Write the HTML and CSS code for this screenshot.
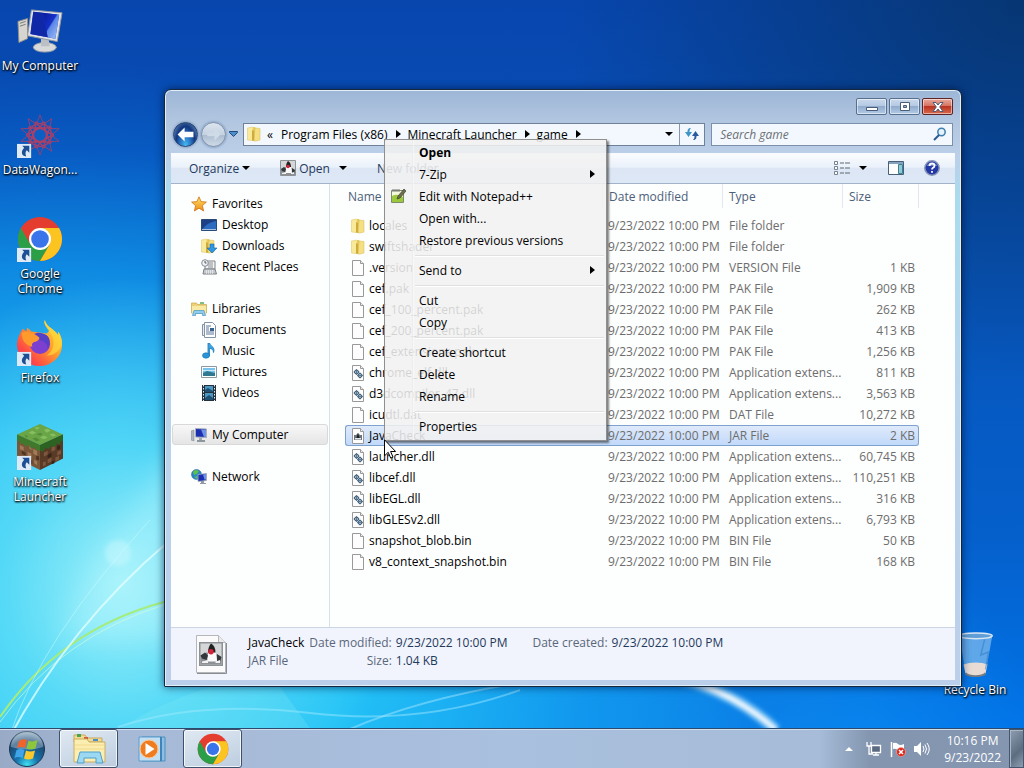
FILE: index.html
```html
<!DOCTYPE html>
<html lang="en">

<head>
  <meta charset="UTF-8"/>
  <meta name="viewport" content="width=device-width, initial-scale=1.0"/>
  <title>game</title>
  <link rel="stylesheet" href="styles.css">
</head>

<body>
<svg class="defs" aria-hidden="true">
  <defs>
    <linearGradient id="gFolder" x1="0" x2="1" y1="0" y2="0">
      <stop offset="0" stop-color="#f9ec9c"/><stop offset=".5" stop-color="#dfc04e"/><stop offset="1" stop-color="#f8e892"/>
    </linearGradient>
    <linearGradient id="gScreen" x1="0" x2="1" y1="0" y2="1">
      <stop offset="0" stop-color="#0b1c9a"/><stop offset=".45" stop-color="#1530c8"/><stop offset=".5" stop-color="#5a86e8"/><stop offset="1" stop-color="#a9c6f6"/>
    </linearGradient>
    <linearGradient id="gFire" x1="1" x2="0" y1="0" y2="1">
      <stop offset="0" stop-color="#fff24a"/><stop offset=".4" stop-color="#ffa22a"/><stop offset=".75" stop-color="#ff4b45"/><stop offset="1" stop-color="#e8227c"/>
    </linearGradient>
    <radialGradient id="gOrb" cx=".5" cy=".95" r=".9">
      <stop offset="0" stop-color="#3fe0f0"/><stop offset=".35" stop-color="#1673ae"/><stop offset=".75" stop-color="#1d4a74"/><stop offset="1" stop-color="#7f9fb8"/>
    </radialGradient>
    <linearGradient id="gStar" x1="0" x2="0" y1="0" y2="1">
      <stop offset="0" stop-color="#ffe36a"/><stop offset="1" stop-color="#f08a14"/>
    </linearGradient>
  </defs>

  <symbol id="folder" viewBox="0 0 16 16">
    <path d="M1.500 2l5-1v13.500l-5-.500z" fill="#f8ea9a" stroke="#dcc25e" stroke-width=".5"/>
    <path d="M6 1h3l1 2v12l-4-1z" fill="url(#gFolder)"/>
    <path d="M9 2l5 .5V14l-4 1H8z" fill="#f4e083" stroke="#d6b850" stroke-width=".5"/>
    <path d="M6 4v10.500l2 .5V5z" fill="#cfab3a"/>
  </symbol>
  <symbol id="page" viewBox="0 0 16 16">
    <path d="M2.500.5h8l3 3v12h-11z" fill="#fdfdfd" stroke="#999"/>
    <path d="M10.500.5v3h3" fill="#eee" stroke="#999"/>
  </symbol>
  <symbol id="dll" viewBox="0 0 16 16">
    <use href="#page"/>
    <circle cx="6.500" cy="7" r="2" fill="#dfe9f3" stroke="#2f526f"/>
    <circle cx="10" cy="10.500" r="2" fill="#dfe9f3" stroke="#2f526f"/>
    <path d="M6.500 4v6M3.500 7h6M10 7.500v6M7 10.500h6" stroke="#2f526f" stroke-width=".6"/>
  </symbol>
  <symbol id="duke" viewBox="0 0 16 16">
    <path d="M.5.5h15v15H.5z" fill="#d4d6d8" stroke="#8e9296"/>
    <path d="M1 9l4-2 6 1 4 2v5H1z" fill="#8d9195"/>
    <path d="M8 2c2 2 4 6 4 11H6c-1-2 0-6 2-11z" fill="#fafafa"/>
    <path d="M8 1c2 1 3 3 3 6L6 7c0-3 1-5 2-6z" fill="#222"/>
    <circle cx="8" cy="6.500" r="1.800" fill="#d3243c"/>
    <path d="M1 9l3-2 2 2-1 3-3-1zM12 8l3 2-1 3h-2z" fill="#33383c"/>
    <path d="M2 13l4-1v2H2zM11 13l3-1v2h-3z" fill="#f2f2f2"/>
  </symbol>
  <symbol id="jar" viewBox="0 0 16 16">
    <use href="#page"/>
    <path d="M4 7h2l2-2 2 2h2v5H4z" fill="#6c757f"/>
    <path d="M8 5l2 6H6z" fill="#1e2328"/><path d="M5 10h6v1.500H5z" fill="#e4e6e8"/>
  </symbol>
  <symbol id="star" viewBox="0 0 16 16">
    <path d="M8 .8l2.100 4.800 5.300.5-4 3.500 1.200 5.400L8 12.200 3.400 15l1.200-5.400-4-3.500 5.300-.5z" fill="url(#gStar)" stroke="#c87618" stroke-width=".8"/>
  </symbol>
  <symbol id="desk" viewBox="0 0 16 16">
    <path d="M.5 2.500h15v11H.5z" fill="#2b6bc0" stroke="#2a4a78"/>
    <path d="M1 13C4 8 9 5 15 4V3H1z" fill="#1c3f86"/>
    <path d="M1 12h14v1H1z" fill="#a8c4e2"/>
  </symbol>
  <symbol id="down" viewBox="0 0 16 16">
    <use href="#folder" x="-1"/>
    <path d="M9 6h4v4h3l-5 5-5-5h3z" fill="#2f97e2" stroke="#1666aa" stroke-width=".6"/>
  </symbol>
  <symbol id="recent" viewBox="0 0 16 16">
    <path d="M4 2h10v8H4z" fill="#f4f4f4" stroke="#7c8288"/>
    <path d="M7 4h5M7 6h5M7 8h5" stroke="#868c94"/>
    <path d="M3 10h11l1.500 5H2z" fill="#c4c8cc" stroke="#7c8288"/>
    <path d="M5 12h7M5 14h8" stroke="#fff" stroke-dasharray="1 1"/>
    <circle cx="4" cy="4" r="3.300" fill="#eef2f6" stroke="#858c94"/>
    <path d="M4 2v2h1.500" fill="none" stroke="#555"/>
  </symbol>
  <symbol id="lib" viewBox="0 0 16 16">
    <path d="M.5 2h5l1 1.500h9V12H.5z" fill="#ecd078" stroke="#c8a848" stroke-width=".7"/>
    <path d="M1 5h14v7H1z" fill="#f8eaa4"/>
    <path d="M9 2h4" stroke="#58a85a" stroke-width="1.500"/>
    <path d="M3 9.500h10l1.500 5h-3v-2h-7v2h-3z" fill="#8fcdf0" stroke="#4a93c0" stroke-width=".7"/>
  </symbol>
  <symbol id="doc" viewBox="0 0 16 16">
    <path d="M3.500.5h8l3 3v12h-11z" fill="#fff" stroke="#8492a4"/>
    <path d="M1.500 2.500h2v11h-2z" fill="#e6ecf4" stroke="#8492a4"/>
    <path d="M5 4h5M5 6h3M5 8h3M5 10h8M5 12h8" stroke="#5c7698"/>
    <path d="M9 6h4v3H9z" fill="#35618e"/>
  </symbol>
  <symbol id="music" viewBox="0 0 16 16">
    <path d="M7 13V0h1.500c1 3.500 6 4 4 9.500 0-3-2-4-4-4.300V13z" fill="#3da6e2" stroke="#1a78b8" stroke-width=".8"/>
    <ellipse cx="5" cy="12.500" rx="3.500" ry="2.700" fill="#2a96da" stroke="#1a70ac" stroke-width=".6"/>
  </symbol>
  <symbol id="pic" viewBox="0 0 16 16">
    <path d="M.5 2.500h15v11H.5z" fill="#fff" stroke="#8b97a3"/>
    <path d="M2 4h12v8H2z" fill="#79c2ec"/><path d="M2 9l4-2 8 2v3H2z" fill="#2f7890"/><path d="M2 6h12v1H2z" fill="#c7e9f8"/>
  </symbol>
  <symbol id="video" viewBox="0 0 16 16">
    <path d="M1 0h14v16H1z" fill="#24303a"/><path d="M4 1h8v6H4zM4 8h8v7H4z" fill="#4a97c4"/>
    <path d="M2.500 0v16M13.500 0v16" stroke="#e4eaf0" stroke-dasharray="1.500 1.500"/>
    <path d="M4 5l3-2 5 3v1H4zM4 13l4-3 4 3v2H4z" fill="#1d5072"/>
  </symbol>
  <symbol id="pc" viewBox="0 0 16 16">
    <path d="M0 4l3-1v11l-3-1z" fill="#aeb6c0" stroke="#7b848e" stroke-width=".5"/>
    <path d="M4.500 1.500l11 .5v8.500l-11-.5z" fill="#1c2fae" stroke="#a9b1bd"/>
    <path d="M10 2.500l5 .2V10l-2-.1z" fill="#6f92e4"/>
    <path d="M8 11h3v2H8z" fill="#a4a9af"/><path d="M6 13h8v2H6z" fill="#8d959e"/>
  </symbol>
  <symbol id="net" viewBox="0 0 16 16">
    <circle cx="5.500" cy="5.500" r="5" fill="#2a85c8" stroke="#1d5e92" stroke-width=".5"/>
    <path d="M2 3c2-3 4-2 6-1L6 5 3 6zM3 8l3-1v3z" fill="#5cc04f"/>
    <path d="M7 5.500l8.500-1v7l-8.500 1z" fill="#1c2fae" stroke="#a9b1bd" stroke-width=".8"/>
    <path d="M12 5.500l3-.4v5.500l-1.500.2z" fill="#6f92e4"/>
    <path d="M10 12h3v2h2v1H9v-1h1z" fill="#9199a2"/>
  </symbol>
  <symbol id="chrome" viewBox="0 0 48 48">
    <circle cx="24" cy="24" r="23" fill="#e53c30"/>
    <path d="M4.100 12.500A23 23 0 0 0 24 47l10-17.200-10 5.700-10-5.700z" fill="#2a9f47"/>
    <path d="M24 12.500h19.900A23 23 0 0 1 24 47l10-17.300z" fill="#fcc420"/>
    <circle cx="24" cy="24" r="11.500" fill="#fff"/><circle cx="24" cy="24" r="9.200" fill="#3a74ea"/>
  </symbol>
  <symbol id="arrow" viewBox="0 0 14 14">
    <path d="M0 0h14v14H0z" fill="#dfeaf6"/>
    <path d="M5 2h7v7l-2.500-2.500C8 8 8 10 9 12.500 4 12 3.500 7.500 7 4z" fill="#1d4f94"/>
  </symbol>
  <symbol id="petal" viewBox="0 0 44 44">
    <path d="M22 1l8 21-8 10-8-10zM22 10l12 4-12 16-12-16z" fill="none" stroke="#a8406a" stroke-width=".8"/>
  </symbol>
</svg>

<main class="desktop">
  <svg class="wallpaper" viewBox="0 0 1024 768" preserveAspectRatio="none" aria-hidden="true">
    <defs>
      <filter id="soft"><feGaussianBlur stdDeviation="2"/></filter>
      <filter id="wide"><feGaussianBlur stdDeviation="14"/></filter>
    </defs>
    <path d="M60 640Q90 560 190 430V640z" fill="#c4fbff" opacity=".35" filter="url(#wide)"/>
    <circle cx="118" cy="553" r="13" fill="#d8fbff" opacity=".4" filter="url(#soft)"/>
    <path d="M0 717Q60 630 164 602" fill="none" stroke="#a4ec7c" stroke-width="2"/>
    <path d="M0 722Q62 636 164 605" fill="none" stroke="#d8ffd0" opacity=".6"/>
    <path d="M8 740Q70 625 168 542" fill="none" stroke="#e6ffff" stroke-width="2" opacity=".75"/>
    <path d="M10 735Q40 640 150 520" fill="none" stroke="#d0fbff" opacity=".5"/>
    <path d="M118 727Q200 700 310 713T520 690" fill="none" stroke="#a8ecff" stroke-width="2" opacity=".45"/>
    <path d="M350 729Q430 695 540 680" fill="none" stroke="#a4e6ff" stroke-width="2" opacity=".5"/>
    <path d="M280 687l30 41H120q40-25 90-41z" fill="#8ff0f4" opacity=".2"/>
    <path d="M640 670Q725 682 776 730" fill="none" stroke="#aee6ff" stroke-width="12" opacity=".5" filter="url(#soft)"/>
    <path d="M650 670Q728 686 776 730" fill="none" stroke="#fff" stroke-width="5" filter="url(#soft)"/>
  </svg>

  <nav class="shortcuts" aria-label="Desktop">
    <a class="shortcut" href="#computer">
      <svg viewBox="0 0 48 48">
        <path d="M1 14l10-3v21L2 36z" fill="#d6d5cf" stroke="#8f8f8b"/><path d="M3 16l6-2M3 19l6-2" stroke="#777"/>
        <ellipse cx="29" cy="41" rx="12" ry="5" fill="#d8d9da" stroke="#969da5"/>
        <path d="M25 32h8l1 8h-9z" fill="#bcc0c4"/>
        <path d="M15 2l32 3-5 30-31-6z" fill="#e0e2e5" stroke="#9299a2"/>
        <path d="M17 4l27 3-4 25-26-5z" fill="#1c36c4"/>
        <path d="M27 5l17 2-4 25-8-1.500z" fill="url(#gScreen)"/>
        <path d="M17 4l10 1 5 25.500L14 27z" fill="#1028a8"/>
      </svg>
      <span>My Computer</span>
    </a>
    <a class="shortcut" href="#datawagon">
      <svg viewBox="0 0 48 48">
        <g transform="translate(2 2)">
          <use href="#petal" width="44" height="44"/>
          <use href="#petal" width="44" height="44" transform="rotate(36 22 22)"/>
          <use href="#petal" width="44" height="44" transform="rotate(72 22 22)"/>
          <use href="#petal" width="44" height="44" transform="rotate(108 22 22)"/>
          <use href="#petal" width="44" height="44" transform="rotate(144 22 22)"/>
          <use href="#petal" width="44" height="44" transform="rotate(180 22 22)"/>
          <use href="#petal" width="44" height="44" transform="rotate(216 22 22)"/>
          <use href="#petal" width="44" height="44" transform="rotate(252 22 22)"/>
          <use href="#petal" width="44" height="44" transform="rotate(288 22 22)"/>
          <use href="#petal" width="44" height="44" transform="rotate(324 22 22)"/>
          <circle cx="22" cy="22" r="6" fill="#0b5fc4"/>
        </g>
        <use href="#arrow" y="33" width="15" height="15"/>
      </svg>
      <span>DataWagon...</span>
    </a>
    <a class="shortcut" href="#chrome-app">
      <svg viewBox="0 0 48 48"><use href="#chrome" width="48" height="48"/><use href="#arrow" y="33" width="15" height="15"/></svg>
      <span>Google Chrome</span>
    </a>
    <a class="shortcut" href="#firefox">
      <svg viewBox="0 0 48 48">
        <path d="M29 0c-2 4 2 7 5 11l-3 3-16-2-4-4c-1 1-1 3-1 4L6 9C2 15 0 20 0 26a23.500 22 0 0 0 47 0c0-6-2-11-4-14v4C39 9 31 8 29 0z" fill="url(#gFire)"/>
        <path d="M29 0c-2 8 8 12 9 21 1 8-3 14-8 16 8 1 17-6 17-14 0-4-2-8-4-11v4C39 9 31 8 29 0z" fill="#ffd93a" opacity=".7"/>
        <circle cx="24" cy="25" r="10.500" fill="#7c3fd0"/>
        <path d="M17 15c4-3 10-2 14 1 4 3 4 10 1 14 0-5-3-8-8-9z" fill="#5740c8"/>
        <path d="M5 13l5-1c4 2 7 1 13 6 1 2-1 4-5 5-2 1-3 2-2 5-6-1-12-7-11-15z" fill="#ff9a2c"/>
        <use href="#arrow" y="33" width="15" height="15"/>
      </svg>
      <span>Firefox</span>
    </a>
    <a class="shortcut" href="#minecraft">
      <svg viewBox="0 0 48 48">
        <path d="M0 11v25l24 12V22z" fill="#7a5539"/><path d="M48 11v25L24 48V22z" fill="#593a26"/>
        <path d="M3 22l4 2v4l-4-2zM11 29l4 2v4l-4-2zM17 26l4 2v5l-4-2zM7 33l3 2v4l-3-2zM18 37l3 2v4l-3-2zM13 22l3 2v3l-3-1z" fill="#a17a58"/>
        <path d="M5 28l4 2v3l-4-2zM12 36l4 2v4l-4-2zM20 33l3 1v4l-3-1z" fill="#4d3321"/>
        <path d="M28 30l4-2v4l-4 2zM36 24l4-2v5l-4 2zM42 29l4-2v4l-4 2zM32 37l4-2v4l-4 2zM40 35l4-2v4l-4 2zM27 40l3-1v4l-3 1z" fill="#7d583c"/>
        <path d="M32 32l4-2v4l-4 2zM42 23l3-1v4l-3 1zM36 39l3-1v3l-3 1z" fill="#38251a"/>
        <path d="M0 11L24 0l24 11-24 11z" fill="#6aa548"/>
        <path d="M0 11v6l3 1v3l3-1 3 4 3-3 3 5 3-2 3 4 3-1v-5z" fill="#3f7a2c"/>
        <path d="M48 11v6l-3 2v3l-3-2-3 4-3-1-3 3-3-1-3 4-3-1v-6z" fill="#2d6322"/>
        <path d="M12 9l4-2 4 2-4 2zM24 14l4-2 4 2-4 2zM28 6l4-1 3 2-4 2zM18 4l3-1 3 1-3 2zM34 11l4-1 3 2-4 1z" fill="#86bf62"/>
        <path d="M8 11l4 2-3 1zM20 11l4-2 3 2-3 1zM16 15l4-1 4 3-4 1z" fill="#528d38"/>
        <use href="#arrow" y="33" width="15" height="15"/>
      </svg>
      <span>Minecraft Launcher</span>
    </a>
  </nav>

  <a class="shortcut recycle" href="#recycle">
    <svg viewBox="0 0 48 48">
      <path d="M8 4l6 39c4 4 17 4 21 0l7-39z" fill="#8fc4ee" opacity=".65"/>
      <path d="M12 34l2 9c4 4 17 4 21 0l2-9c-6-3-18-3-25 0z" fill="#e9dcd4"/>
      <path d="M34 8l-4 16 8-3-3 18" fill="none" stroke="#2f78bd" stroke-width="1.500" opacity=".5"/>
      <ellipse cx="25" cy="4" rx="17" ry="3" fill="#5f9ed6" stroke="#d9e7f2" stroke-width="1.500"/>
      <path d="M14 43c4 4 17 4 21 0" fill="none" stroke="#757b84" stroke-width="2"/>
    </svg>
    <span>Recycle Bin</span>
  </a>

  <section class="window" aria-label="game">
    <header class="titlebar">
      <button class="caption" aria-label="Minimize"><svg viewBox="0 0 12 12"><path d="M.5 6.500h11v3H.5z"/></svg></button>
      <button class="caption" aria-label="Maximize"><svg viewBox="0 0 12 12"><path d="M1.500 1.500h9v8h-9zM4.500 4.500h3v2h-3z" fill-rule="evenodd"/></svg></button>
      <button class="caption caption--close" aria-label="Close"><svg viewBox="0 0 12 12"><path d="M1 1.500h3l2 2.500 2-2.500h3L7.700 6l3.300 4.500H8L6 8l-2 2.500H1L4.300 6z"/></svg></button>
    </header>

    <div class="navbar">
      <div class="travel">
        <button class="travel-btn" aria-label="Back"><svg viewBox="0 0 26 26"><path d="M12 5l-8 8 8 8v-5h10v-6H12z" fill="#fff"/></svg></button>
        <button class="travel-btn travel-btn--off" aria-label="Forward"><svg viewBox="0 0 26 26"><path d="M14 6l7 7-7 7v-5H6v-4h8z" fill="#d0dbe8"/></svg></button>
        <button class="plain" aria-label="Recent pages"><svg class="caret" viewBox="0 0 9 6"><path d="M.5.500h8v1L4.500 5.500l-4-4z" fill="#4d8fcc" stroke="#1e4a7c"/></svg></button>
      </div>
      <div class="address">
        <svg class="icon"><use href="#folder"/></svg>
        <button class="plain chev">«</button>
        <a class="crumb" href="#programs">Program Files (x86)</a>
        <svg class="tri" viewBox="0 0 5 8"><path d="M0 0l5 4-5 4z"/></svg>
        <a class="crumb" href="#launcher">Minecraft Launcher</a>
        <svg class="tri" viewBox="0 0 5 8"><path d="M0 0l5 4-5 4z"/></svg>
        <a class="crumb" href="#game">game</a>
        <svg class="tri" viewBox="0 0 5 8"><path d="M0 0l5 4-5 4z"/></svg>
        <button class="plain address-drop" aria-label="Previous locations"><svg class="drop" viewBox="0 0 8 4"><path d="M0 0h8L4 4z"/></svg></button>
        <button class="plain refresh" aria-label="Refresh"><svg viewBox="0 0 16 16"><path d="M7 2C4 2 3.500 4 3.500 6H1l3.500 5L8 6H5.500c0-2 .5-3 1.500-4z" fill="#3c96c8"/><path d="M9 14c3 0 3.500-2 3.500-4H15l-3.500-5L8 10h2.500c0 2-.5 3-1.500 4z" fill="#2d5a9c"/></svg></button>
      </div>
      <label class="search">
        <input type="text" placeholder="Search game" aria-label="Search game"/>
        <svg viewBox="0 0 14 14"><circle cx="8.500" cy="5" r="3.700" fill="#e4f2fc" stroke="#3f7fae" stroke-width="1.500"/><path d="M6 8l-5 5" stroke="#2d5b8e" stroke-width="2"/></svg>
      </label>
    </div>

    <div class="content">
      <div class="toolbar">
        <button class="tool">Organize <svg class="drop" viewBox="0 0 8 4"><path d="M0 0h8L4 4z"/></svg></button>
        <button class="tool tool--open"><svg class="icon"><use href="#duke"/></svg><span>Open</span><svg class="drop" viewBox="0 0 8 4"><path d="M0 0h8L4 4z"/></svg></button>
        <button class="tool">New folder</button>
        <div class="tool-right">
          <button class="tool" aria-label="Change view"><svg class="icon" viewBox="0 0 16 16"><path d="M.500 1.500h3v3h-3zM.500 6.500h3v3h-3zM.500 11.500h3v3h-3z" fill="#fff" stroke="#76838f"/><path d="M6 3h4M11 3h5M6 8h4M11 8h5M6 13h4M11 13h5" stroke="#5c6874"/></svg></button>
          <button class="tool" aria-label="More view options"><svg class="drop" viewBox="0 0 8 4"><path d="M0 0h8L4 4z"/></svg></button>
          <button class="tool tool--pane" aria-label="Preview pane"><svg class="icon" viewBox="0 0 16 16"><path d="M.5 1.500h15v13H.5z" fill="#fff" stroke="#45607c"/><path d="M1 2h14v2H1z" fill="#86a2bd"/><path d="M10.500 4.500h4v9h-4z" fill="#8fcad6" stroke="#3c7f90"/></svg></button>
          <button class="tool" aria-label="Help"><svg class="icon" viewBox="0 0 16 16"><circle cx="8" cy="8" r="7.200" fill="#2338a4" stroke="#8793b8" stroke-width="1.500"/><path d="M2.500 6a6 5 0 0 1 11 0z" fill="#7d97e2" opacity=".7"/><path d="M5.500 6q0-2.500 2.500-2.500t2.500 2.200Q10.500 7 9 7.800q-1 .6-1 1.700M8 11v1.800" fill="none" stroke="#fff" stroke-width="1.800"/></svg></button>
        </div>
      </div>

      <div class="panes">
        <nav class="sidebar" aria-label="Folders">
          <ul>
            <li><a class="node" href="#favorites"><svg class="icon"><use href="#star"/></svg>Favorites</a></li>
            <li><a class="node node--sub" href="#desktop"><svg class="icon"><use href="#desk"/></svg>Desktop</a></li>
            <li><a class="node node--sub" href="#downloads"><svg class="icon"><use href="#down"/></svg>Downloads</a></li>
            <li><a class="node node--sub" href="#recents"><svg class="icon"><use href="#recent"/></svg>Recent Places</a></li>
          </ul>
          <ul>
            <li><a class="node" href="#libraries"><svg class="icon"><use href="#lib"/></svg>Libraries</a></li>
            <li><a class="node node--sub" href="#documents"><svg class="icon"><use href="#doc"/></svg>Documents</a></li>
            <li><a class="node node--sub" href="#musics"><svg class="icon"><use href="#music"/></svg>Music</a></li>
            <li><a class="node node--sub" href="#pictures"><svg class="icon"><use href="#pic"/></svg>Pictures</a></li>
            <li><a class="node node--sub" href="#videos"><svg class="icon"><use href="#video"/></svg>Videos</a></li>
          </ul>
          <ul>
            <li><a class="node node--active" href="#computer"><svg class="icon"><use href="#pc"/></svg>My Computer</a></li>
          </ul>
          <ul>
            <li><a class="node" href="#network"><svg class="icon"><use href="#net"/></svg>Network</a></li>
          </ul>
        </nav>

        <div class="list">
          <table>
            <colgroup><col class="col-name"><col class="col-mid"><col class="col-mid"><col class="col-size"></colgroup>
            <thead>
              <tr><th>Name</th><th>Date modified</th><th>Type</th><th>Size</th></tr>
            </thead>
            <tbody>
              <tr><td><svg class="icon"><use href="#folder"/></svg>locales</td><td>9/23/2022 10:00 PM</td><td>File folder</td><td></td></tr>
              <tr><td><svg class="icon"><use href="#folder"/></svg>swiftshader</td><td>9/23/2022 10:00 PM</td><td>File folder</td><td></td></tr>
              <tr><td><svg class="icon"><use href="#page"/></svg>.version</td><td>9/23/2022 10:00 PM</td><td>VERSION File</td><td>1 KB</td></tr>
              <tr><td><svg class="icon"><use href="#page"/></svg>cef.pak</td><td>9/23/2022 10:00 PM</td><td>PAK File</td><td>1,909 KB</td></tr>
              <tr><td><svg class="icon"><use href="#page"/></svg>cef_100_percent.pak</td><td>9/23/2022 10:00 PM</td><td>PAK File</td><td>262 KB</td></tr>
              <tr><td><svg class="icon"><use href="#page"/></svg>cef_200_percent.pak</td><td>9/23/2022 10:00 PM</td><td>PAK File</td><td>413 KB</td></tr>
              <tr><td><svg class="icon"><use href="#page"/></svg>cef_extensions.pak</td><td>9/23/2022 10:00 PM</td><td>PAK File</td><td>1,256 KB</td></tr>
              <tr><td><svg class="icon"><use href="#dll"/></svg>chrome_elf.dll</td><td>9/23/2022 10:00 PM</td><td>Application extens...</td><td>811 KB</td></tr>
              <tr><td><svg class="icon"><use href="#dll"/></svg>d3dcompiler_47.dll</td><td>9/23/2022 10:00 PM</td><td>Application extens...</td><td>3,563 KB</td></tr>
              <tr><td><svg class="icon"><use href="#page"/></svg>icudtl.dat</td><td>9/23/2022 10:00 PM</td><td>DAT File</td><td>10,272 KB</td></tr>
              <tr class="selected"><td><svg class="icon"><use href="#jar"/></svg>JavaCheck</td><td>9/23/2022 10:00 PM</td><td>JAR File</td><td>2 KB</td></tr>
              <tr><td><svg class="icon"><use href="#dll"/></svg>launcher.dll</td><td>9/23/2022 10:00 PM</td><td>Application extens...</td><td>60,745 KB</td></tr>
              <tr><td><svg class="icon"><use href="#dll"/></svg>libcef.dll</td><td>9/23/2022 10:00 PM</td><td>Application extens...</td><td>110,251 KB</td></tr>
              <tr><td><svg class="icon"><use href="#dll"/></svg>libEGL.dll</td><td>9/23/2022 10:00 PM</td><td>Application extens...</td><td>316 KB</td></tr>
              <tr><td><svg class="icon"><use href="#dll"/></svg>libGLESv2.dll</td><td>9/23/2022 10:00 PM</td><td>Application extens...</td><td>6,793 KB</td></tr>
              <tr><td><svg class="icon"><use href="#page"/></svg>snapshot_blob.bin</td><td>9/23/2022 10:00 PM</td><td>BIN File</td><td>50 KB</td></tr>
              <tr><td><svg class="icon"><use href="#page"/></svg>v8_context_snapshot.bin</td><td>9/23/2022 10:00 PM</td><td>BIN File</td><td>168 KB</td></tr>
            </tbody>
          </table>
        </div>
      </div>

      <footer class="details">
        <svg class="details-icon" viewBox="0 0 32 40">
          <path d="M1.500 1.500h22l7 7v30h-29z" fill="#fbfbfb" stroke="#b4b6ba"/><path d="M23.500 1.500v7h7" fill="#eaeaea" stroke="#b4b6ba"/>
          <path d="M2 39.500h29.500V9" fill="none" stroke="#8a8d92"/>
          <use href="#duke" x="4" y="8" width="24" height="24"/>
        </svg>
        <div class="details-name"><strong>JavaCheck</strong><span>JAR File</span></div>
        <dl>
          <dt>Date modified:</dt><dd>9/23/2022 10:00 PM</dd>
          <dt>Size:</dt><dd>1.04 KB</dd>
        </dl>
        <dl class="details-created">
          <dt>Date created:</dt><dd>9/23/2022 10:00 PM</dd>
        </dl>
      </footer>
    </div>
  </section>

  <ul class="menu" role="menu">
    <li role="none"><button role="menuitem" class="menu-default">Open</button></li>
    <li role="none"><button role="menuitem">7-Zip<svg class="tri" viewBox="0 0 5 8"><path d="M0 0l5 4-5 4z"/></svg></button></li>
    <li role="none"><button role="menuitem"><svg class="menu-icon" viewBox="0 0 16 16"><path d="M1.500 2.500h12v12h-12z" fill="#f4f8dc" stroke="#7d8a6c"/><path d="M2 8q5-3 11 1v5H2z" fill="#9cc83c"/><path d="M3 1v3M5 1v3M7 1v3M9 1v3" stroke="#777"/><path d="M14 1l2 2-6 7-3 1 1-3z" fill="#6d6f48" stroke="#333" stroke-width=".6"/></svg>Edit with Notepad++</button></li>
    <li role="none"><button role="menuitem">Open with...</button></li>
    <li role="none"><button role="menuitem">Restore previous versions</button></li>
    <li role="separator"></li>
    <li role="none"><button role="menuitem">Send to<svg class="tri" viewBox="0 0 5 8"><path d="M0 0l5 4-5 4z"/></svg></button></li>
    <li role="separator"></li>
    <li role="none"><button role="menuitem">Cut</button></li>
    <li role="none"><button role="menuitem">Copy</button></li>
    <li role="separator"></li>
    <li role="none"><button role="menuitem">Create shortcut</button></li>
    <li role="none"><button role="menuitem">Delete</button></li>
    <li role="none"><button role="menuitem">Rename</button></li>
    <li role="separator"></li>
    <li role="none"><button role="menuitem">Properties</button></li>
  </ul>

  <svg class="cursor" viewBox="0 0 12 20" aria-hidden="true"><path d="M.500.800v16l3.700-3.500 2.500 5.800 2.300-1L6.600 12.500h5z" fill="#fff" stroke="#000"/></svg>
</main>

<footer class="taskbar">
  <button class="start" aria-label="Start">
    <svg viewBox="0 0 38 38">
      <circle cx="19" cy="19" r="17.500" fill="url(#gOrb)" stroke="#1b3852"/>
      <path d="M3 17a16 16 0 0 1 32 0q-16 5-32 0z" fill="#fff" opacity=".3"/>
      <path d="M11 11q4-3 8-1l-2 8q-4-2-8 0z" fill="#f0642c"/>
      <path d="M20.500 10.500q4 2 9-.5l-2 8.500q-5 2-9 0z" fill="#8cc63c"/>
      <path d="M8.500 20q4-2 8 0l-2 8q-4-2-8 0z" fill="#3fa4e8"/>
      <path d="M18 20.500q4 2 9 0l-2 8q-5 2-9 0z" fill="#fcc92c"/>
    </svg>
  </button>
  <div class="tasks">
    <button class="task task--on" aria-label="File Explorer">
      <svg viewBox="0 0 36 32">
        <path d="M3 2h11l2 3h15v4H3z" fill="#f2dc92" stroke="#c9a858"/><path d="M6 1h4v3H6z" fill="#4aa34e"/><path d="M13 4h4v2h-4z" fill="#cc5a3c"/><path d="M22 6h5v2h-5z" fill="#4d8fca"/>
        <path d="M3 6h13l2 3h16v20H3z" fill="#fbeeb0" stroke="#cbae62"/><path d="M4 12h29M4 16h29" stroke="#f1d98a"/>
        <path d="M9 19h20l3 11h-7v-5H13v5H6z" fill="#9cd8f2" stroke="#4da0cc"/>
      </svg>
    </button>
    <button class="task" aria-label="Media Player">
      <svg viewBox="0 0 36 32">
        <path d="M9 4h23v24H9z" fill="#8dbfe2" stroke="#4f8fc0"/><path d="M6 4h22v24H6z" fill="#c3dff2" stroke="#5d9ccb"/><path d="M28 4v24" stroke="#3f84ba" stroke-width="2"/>
        <circle cx="16" cy="16" r="9" fill="#f07c20" stroke="#f9c89a"/><path d="M12.500 10l9 6-9 6z" fill="#fff"/>
      </svg>
    </button>
    <button class="task task--on" aria-label="Google Chrome"><svg viewBox="0 0 32 32"><use href="#chrome" width="32" height="32"/></svg></button>
  </div>
  <div class="tray">
    <button class="plain" aria-label="Show hidden icons"><svg class="drop" viewBox="0 0 8 4"><path d="M0 4h8L4 0z" fill="#fff"/></svg></button>
    <svg class="icon" viewBox="0 0 16 16"><path d="M5.500 4.500h9v7h-9zM7 14h6M10 12v2" fill="#5a6a80" stroke="#fff" stroke-width="1.300"/><path d="M1 1v4h4V1M3 5v8h4" fill="none" stroke="#fff" stroke-width="1.300"/></svg>
    <svg class="icon" viewBox="0 0 16 16"><path d="M1.500 1v15" stroke="#fff" stroke-width="1.500"/><path d="M3 2q3-1 5 1t6 0v6q-3 2-6 0T3 8z" fill="#fff"/><circle cx="11" cy="11" r="4.500" fill="#d8281c" stroke="#f6b0a8" stroke-width=".6"/><path d="M9 9l4 4M13 9l-4 4" stroke="#fff" stroke-width="1.500"/></svg>
    <svg class="icon" viewBox="0 0 16 16"><path d="M0 5h3l4-4v14l-4-4H0z" fill="#fff"/><path d="M9 5q2 3 0 6M11 3.500q3 4.500 0 9M13 2q4.500 6 0 12" fill="none" stroke="#fff"/></svg>
    <time datetime="2022-09-23T22:16">10:16 PM<br>9/23/2022</time>
  </div>
  <button class="peek" aria-label="Show desktop"></button>
</footer>
</body>

</html>
```
FILE: styles.css
```css
* {
  box-sizing: border-box;
}

body {
  margin: 0;
  height: 100vh;
  display: flex;
  flex-direction: column;
  overflow: hidden;
  font-family: "Open Sans", "Noto Sans", sans-serif;
  font-size: 12px;
  line-height: 15px;
  color: #000;
  background:
    radial-gradient(ellipse 26% 40% at 12% 76%, rgba(176, 246, 250, 0.85), rgba(110, 228, 248, 0.6) 45%, rgba(60, 210, 248, 0) 100%),
    radial-gradient(ellipse 80% 76% at 6% 84%, #35cdf5 0%, rgba(36, 196, 246, 0.95) 35%, rgba(16, 150, 236, 0.8) 65%, rgba(8, 110, 215, 0.4) 85%, rgba(8, 100, 205, 0) 100%),
    radial-gradient(ellipse 60% 50% at 42% 100%, rgba(28, 176, 255, 0.9), rgba(10, 130, 240, 0) 100%),
    radial-gradient(ellipse 45% 50% at 100% 0%, rgba(6, 50, 100, 0.8), rgba(6, 60, 130, 0) 100%),
    linear-gradient(180deg, #0846ae 0%, #0753b8 35%, #0560cc 70%, #0078ee 100%);
}

button,
input {
  font: inherit;
  color: inherit;
}

button {
  display: flex;
  align-items: center;
  margin: 0;
  padding: 0;
  border: 0;
  background: none;
}

a {
  color: inherit;
  text-decoration: none;
}

ul,
dl,
dd {
  margin: 0;
  padding: 0;
  list-style: none;
}

.defs {
  position: absolute;
  width: 0;
  height: 0;
}

.icon {
  flex: none;
  width: 16px;
  height: 16px;
}

.drop {
  width: 8px;
  height: 4px;
}

.tri {
  width: 5px;
  height: 8px;
}

/* desktop */
.desktop {
  position: relative;
  flex: 1;
  min-height: 0;
}

.wallpaper {
  position: absolute;
  top: 0;
  left: 0;
  width: 100%;
  height: 100vh;
}

.shortcuts {
  position: absolute;
  top: 8px;
  left: 0;
  display: grid;
  grid-auto-rows: 104px;
}

.shortcut {
  display: flex;
  flex-direction: column;
  align-items: center;
  gap: 4px;
  width: 80px;
  color: #fff;
  text-align: center;
  text-shadow: 1px 1px 2px #000, 0 1px 2px #000;
}

.shortcut svg {
  width: 46px;
  height: 46px;
}

.recycle {
  position: absolute;
  right: 9px;
  bottom: 31px;
}

/* explorer window */
.window {
  position: absolute;
  top: 89px;
  right: 62px;
  bottom: 41px;
  left: 164px;
  display: flex;
  flex-direction: column;
  padding: 0 6px 6px;
  border: 1px solid #16263c;
  border-radius: 7px 7px 1px 1px;
  background: linear-gradient(180deg, #9db6d6 0, #b3c7e1 34px, #bccfe9 64px, #a9dcee 110px, #bad5ec 300px, #bccfea 100%);
  box-shadow: inset 0 0 0 1px #e0f0fb, 0 0 8px rgba(0, 20, 60, 0.7);
}

.titlebar {
  display: flex;
  justify-content: flex-end;
  gap: 2px;
  height: 33px;
  padding: 8px 2px 0;
}

.caption {
  justify-content: center;
  width: 31px;
  height: 17px;
  border: 1px solid #58708e;
  border-radius: 2px;
  background: linear-gradient(180deg, #c9d9ec 0, #b4c9e2 48%, #92acce 50%, #b2cae4 100%);
  box-shadow: inset 0 0 0 1px rgba(255, 255, 255, 0.5);
}

.caption svg {
  width: 12px;
  height: 12px;
  fill: #fff;
  stroke: #4a5c76;
}

.caption--close {
  border-color: #5c2426;
  background: linear-gradient(180deg, #e8a99c 0, #d5715f 48%, #bb3421 50%, #d8684c 100%);
}

.navbar {
  display: flex;
  align-items: center;
  gap: 6px;
  height: 30px;
  padding: 0 2px 8px;
}

.travel {
  display: flex;
  align-items: center;
  gap: 3px;
  margin-right: -1px;
}

.travel-btn {
  width: 25px;
  height: 25px;
  border: 1px solid #26446e;
  border-radius: 50%;
  background: radial-gradient(ellipse at 50% 100%, #48bdf6 0, #1f5cae 45%, #12377c 60%, #7fa3d6 100%);
  box-shadow: 0 0 2px 1px #8fa9c9;
}

.travel-btn--off {
  border-color: #7d8fa8;
  background: linear-gradient(180deg, #dce5ef 0, #c5d2e1 50%, #abbccf 51%, #cfdae8 100%);
}

.caret {
  width: 9px;
  height: 6px;
}

.address {
  flex: 1;
  display: flex;
  align-items: center;
  min-width: 0;
  height: 23px;
  padding-left: 2px;
  border: 1px solid #6e8199;
  background: #f2f8fd;
  white-space: nowrap;
}

.chev {
  margin: 0 8px 0 5px;
}

.crumb + .tri {
  margin: 0 7px 0 8px;
}

.address-drop {
  margin-left: auto;
  padding: 0 6px;
}

.refresh {
  align-self: stretch;
  padding: 0 4px;
  border-left: 1px solid #8798ae;
}

.refresh svg {
  width: 16px;
  height: 16px;
}

.search {
  flex: 0 0 31%;
  display: flex;
  align-items: center;
  min-width: 0;
  height: 23px;
  padding: 0 5px 0 8px;
  border: 1px solid #7b90aa;
  background: #f2f8fd;
}

.search input {
  flex: 1;
  min-width: 0;
  padding: 0;
  border: 0;
  outline: 0;
  background: none;
}

.search input::placeholder {
  color: #6d7075;
  font-style: italic;
}

.search svg {
  width: 14px;
  height: 14px;
}

.content {
  flex: 1;
  display: flex;
  flex-direction: column;
  min-height: 0;
  background: #fdfefe;
}

.toolbar {
  display: flex;
  align-items: center;
  gap: 30px;
  height: 31px;
  padding: 0 15px 1px 18px;
  border-top: 1px solid #f7fbff;
  border-bottom: 1px solid #a2b3ca;
  background: linear-gradient(180deg, #fafcfe 0, #eaf1fa 45%, #dce6f4 50%, #dde8f6 100%);
  color: #1e395b;
}

.tool {
  gap: 3px;
}

.tool--open .drop {
  margin-left: 6px;
}

.tool-right {
  display: flex;
  align-items: center;
  gap: 9px;
  margin-left: auto;
}

.tool--pane {
  margin: 0 11px 0 12px;
}

.panes {
  flex: 1;
  display: flex;
  min-height: 0;
}

.sidebar {
  flex: none;
  display: flex;
  flex-direction: column;
  gap: 21px;
  width: 159px;
  padding: 9px 1px 0;
  border-right: 1px solid #d6e0ee;
}

.node {
  display: flex;
  align-items: center;
  gap: 5px;
  height: 21px;
  padding-left: 18px;
  border: 1px solid transparent;
}

.node--sub {
  padding-left: 28px;
}

.node--active {
  border-color: #d9d9d9;
  border-radius: 3px;
  background: linear-gradient(180deg, #f8f8f8, #e5e5e5);
}

.list {
  flex: 1;
  min-width: 0;
  padding-left: 15px;
  overflow: hidden;
}

table {
  width: 574px;
  table-layout: fixed;
  border-collapse: separate;
  border-spacing: 0;
  white-space: nowrap;
}

.col-name {
  width: 258px;
}

.col-mid {
  width: 120px;
}

th {
  height: 24px;
  padding: 1px 6px 0;
  border-right: 1px solid #e2e8f0;
  color: #4c607a;
  font-weight: normal;
  text-align: left;
}

th:first-child {
  padding-left: 3px;
}

/* gap between the heading row and the first file */
tbody::before {
  content: "";
  display: table-row;
  height: 7px;
}

td {
  height: 21px;
  padding: 0 0 0 5px;
  border: 1px solid transparent;
  border-width: 1px 0;
  line-height: 16px;
  color: #6d6d6d;
}

td:first-child {
  padding-left: 4px;
  border-left-width: 1px;
  color: #000;
}

td:nth-child(3) {
  padding-left: 6px;
}

td:last-child {
  padding-right: 3px;
  border-right-width: 1px;
  text-align: right;
}

td .icon {
  margin-right: 3px;
  vertical-align: top;
}

.selected td {
  border-color: #7da2ce;
  background: linear-gradient(180deg, #dfeafa, #c2d9fb);
}

.selected td:first-child {
  border-radius: 3px 0 0 3px;
}

.selected td:last-child {
  border-radius: 0 3px 3px 0;
}

.details {
  display: flex;
  align-items: flex-start;
  height: 53px;
  padding: 6px 24px;
  border-top: 1px solid #ccd5e4;
  background: #f1f4fd;
  line-height: 18px;
  color: #5a6779;
  white-space: nowrap;
}

.details-icon {
  width: 32px;
  height: 40px;
  margin-right: 21px;
}

.details-name {
  display: flex;
  flex-direction: column;
}

.details-name strong {
  font-weight: normal;
  color: #000;
}

.details dl {
  display: grid;
  grid-template-columns: auto auto;
  column-gap: 4px;
  margin-left: 5px;
}

.details dt {
  text-align: right;
}

.details dd {
  color: #1e395b;
}

.details .details-created {
  margin-left: 25px;
}

/* context menu */
.menu {
  position: absolute;
  top: 139px;
  left: 384px;
  width: 223px;
  padding: 2px;
  border: 1px solid #8f8f8f;
  background: linear-gradient(90deg, transparent 27px, rgba(215, 215, 215, 0.8) 27px, rgba(255, 255, 255, 0.8) 28px, transparent 29px), rgba(241, 241, 241, 0.87);
  box-shadow: 2px 2px 2px rgba(0, 0, 0, 0.5);
}

.menu button {
  position: relative;
  justify-content: space-between;
  width: 100%;
  height: 22px;
  padding: 0 9px 2px 32px;
}

.menu .menu-default {
  font-weight: bold;
}

.menu-icon {
  position: absolute;
  left: 3px;
  width: 16px;
  height: 16px;
}

.menu [role="separator"] {
  height: 8px;
  margin-left: 28px;
  background: linear-gradient(180deg, transparent 3px, #e0e0e0 3px, #e0e0e0 4px, #fff 4px, #fff 5px, transparent 5px);
}

.cursor {
  position: absolute;
  top: 439px;
  left: 384px;
  width: 12px;
  height: 20px;
}

/* taskbar */
.taskbar {
  position: relative;
  display: flex;
  height: 40px;
  border-top: 1px solid #2b4a6c;
  background: linear-gradient(90deg, #98aac6 0, #a6b9d6 12%, #a9c0de 50%, #a6bcd8 80%, #8395af 85%, #8496b0 100%);
  box-shadow: inset 0 1px 0 #cfdff0;
}

.start {
  justify-content: center;
  width: 54px;
}

.start svg {
  width: 38px;
  height: 38px;
}

.tasks {
  display: flex;
  gap: 3px;
  padding-left: 5px;
}

.task {
  justify-content: center;
  width: 59px;
  border: 1px solid transparent;
  border-radius: 3px;
}

.task svg {
  width: 36px;
  height: 32px;
}

.task--on {
  border-color: #3d506c;
  background: linear-gradient(160deg, #e0e9f2, #bccddf);
  box-shadow: inset 0 0 0 1px rgba(255, 255, 255, 0.75);
}

.tray {
  display: flex;
  align-items: center;
  gap: 8px;
  margin-left: auto;
  padding-right: 8px;
  color: #fff;
}

.tray .plain {
  padding-right: 5px;
}

.tray time {
  margin-left: 6px;
  line-height: 17px;
  text-align: center;
}

.peek {
  width: 15px;
  border: 1px solid #45566f;
  background: linear-gradient(135deg, #8f9db0, #5c6d82 60%, #8d9db2);
  box-shadow: inset 1px 1px 0 #a9b6c6;
}
```
